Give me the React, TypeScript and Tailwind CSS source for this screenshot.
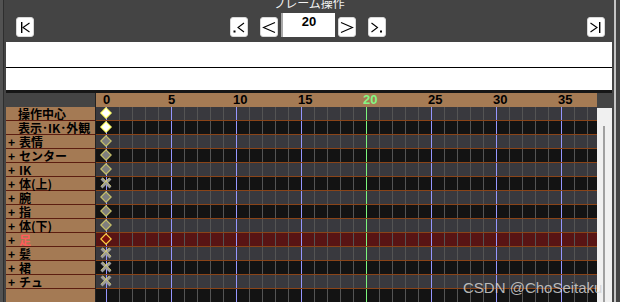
import React from "react";

type RowDef = {
  label: string;
  indent?: boolean;
  red?: boolean;
  bg: string;
  key: "white" | "gray" | "red" | "x" | null;
};

const FRAMES = Array.from({ length: 38 }, (_, i) => i);

const ROWS: RowDef[] = [
  { label: "操作中心", indent: true, bg: "bg-[#39393e]", key: "white" },
  { label: "表示･IK･外観", indent: true, bg: "bg-[#131313]", key: "white" },
  { label: "表情", bg: "bg-[#39393e]", key: "gray" },
  { label: "センター", bg: "bg-[#131313]", key: "gray" },
  { label: "IK", bg: "bg-[#39393e]", key: "gray" },
  { label: "体(上)", bg: "bg-[#131313]", key: "x" },
  { label: "腕", bg: "bg-[#39393e]", key: "gray" },
  { label: "指", bg: "bg-[#131313]", key: "gray" },
  { label: "体(下)", bg: "bg-[#39393e]", key: "gray" },
  { label: "足", red: true, bg: "bg-[#581414]", key: "red" },
  { label: "髪", bg: "bg-[#39393e]", key: "x" },
  { label: "裙", bg: "bg-[#131313]", key: "x" },
  { label: "チュ", bg: "bg-[#39393e]", key: "x" },
];

function lineColor(k: number) {
  if (k === 20) return "border-[#7cf57c]";
  if (k % 5 === 0) return "border-[#9696ff]";
  return "border-[#545454]";
}

function KeyMark({ kind }: { kind: RowDef["key"] }) {
  if (!kind) return null;
  if (kind === "x") {
    return (
      <svg width="12" height="12" viewBox="0 0 12 12" className="absolute left-[4px] top-[0px]">
        <path d="M1.5 1.5L10.5 10.5M10.5 1.5L1.5 10.5" stroke="#9c9c9c" strokeWidth="2.8" />
        <path d="M2.8 1L11 9.2M1 9.2L9.2 1" stroke="#e6dc6a" strokeWidth="0.8" />
      </svg>
    );
  }
  const fill = kind === "white" ? "#ffffff" : kind === "red" ? "#7a0e0e" : "#7e7e7e";
  const stroke = kind === "white" ? "#ffff70" : kind === "red" ? "#ffd040" : "#c8c26a";
  return (
    <svg width="12" height="12" viewBox="0 0 12 12" className="absolute left-[4px] top-[0px]">
      <polygon points="6,0.8 11.2,6 6,11.2 0.8,6" fill={fill} stroke={stroke} strokeWidth="1.2" />
    </svg>
  );
}

function GridRow({ bg, kind }: { bg: string; kind: RowDef["key"] }) {
  return (
    <div className={`relative flex h-[14px] border-b border-[#8a4418] ${bg}`}>
      <div className="w-[10px] shrink-0" />
      {FRAMES.map((k) => (
        <div
          key={k}
          className={`${k === 37 ? "w-[10px]" : "w-[13px]"} shrink-0 border-l ${lineColor(k)}`}
        />
      ))}
      <KeyMark kind={kind} />
    </div>
  );
}

function NavButton({ children }: { children: React.ReactNode }) {
  return (
    <div className="h-[20px] w-[18px] shrink-0 rounded-[3px] border border-[#d8d8d8] bg-white">
      <svg width="16" height="18" viewBox="0 0 16 18" fill="none" stroke="black" strokeWidth="1.1">
        {children}
      </svg>
    </div>
  );
}

export default function App() {
  return (
    <div className="relative flex h-[302px] w-[620px] overflow-hidden bg-[#444] font-['Noto_Sans_CJK_JP','Noto_Sans',sans-serif]">
      {/* left edge */}
      <div className="flex w-[6px] shrink-0">
        <div className="w-[3px] bg-[#525252]" />
        <div className="w-[1px] bg-[#2e2e2e]" />
        <div className="w-[2px] bg-[#444]" />
      </div>

      <div className="flex w-[606px] shrink-0 flex-col">
        {/* frame controls */}
        <div className="flex h-[42px] shrink-0 flex-col items-center">
          <div className="-mt-[3px] h-[12px] text-[12px] leading-[12px] text-[#f2f2f2]">フレーム操作</div>
          <div className="mt-[4px] flex h-[24px] w-full items-end">
            <div className="ml-[10px]">
              <NavButton>
                <rect x="4" y="4" width="1.4" height="11" fill="black" stroke="none" />
                <polyline points="12.5,5 6,9.5 12.5,14" />
              </NavButton>
            </div>
            <div className="ml-[196px]">
              <NavButton>
                <rect x="2.5" y="12.5" width="2" height="2" fill="black" stroke="none" />
                <polyline points="13,5 7,9.5 13,14" />
              </NavButton>
            </div>
            <div className="ml-[12px]">
              <NavButton>
                <polyline points="14,4.5 2.5,9.5 14,14.5" />
              </NavButton>
            </div>
            <div className="ml-[3px] flex h-[24px] w-[54px] shrink-0 justify-center border-l-2 border-[#a8a8a8] bg-white pt-[2px] font-['Liberation_Sans',sans-serif] text-[13px] font-bold leading-[14px] text-black">
              20
            </div>
            <div className="ml-[3px]">
              <NavButton>
                <polyline points="2,4.5 13.5,9.5 2,14.5" />
              </NavButton>
            </div>
            <div className="ml-[12px]">
              <NavButton>
                <polyline points="2.5,5 8.5,9.5 2.5,14" />
                <rect x="11" y="12.5" width="2" height="2" fill="black" stroke="none" />
              </NavButton>
            </div>
            <div className="ml-[201px]">
              <NavButton>
                <polyline points="2.5,5 9,9.5 2.5,14" />
                <rect x="11" y="4" width="1.4" height="11" fill="black" stroke="none" />
              </NavButton>
            </div>
          </div>
        </div>

        {/* white panel */}
        <div className="h-[25px] shrink-0 bg-white" />
        <div className="h-[1px] shrink-0 bg-black" />
        <div className="h-[22px] shrink-0 bg-white" />
        <div className="h-[3px] shrink-0 bg-[#161616]" />

        {/* timeline */}
        <div className="flex">
          {/* labels */}
          <div className="flex w-[90px] shrink-0 flex-col border-r border-[#222]">
            <div className="h-[14px] bg-[#444]" />
            {ROWS.map((r) => (
              <div
                key={r.label}
                className="flex h-[14px] items-center border-b border-[#5c1d10] bg-[#a47a54] text-[12px] font-bold leading-[13px] text-black"
              >
                {r.indent ? (
                  <span className="pl-[12px] whitespace-nowrap">{r.label}</span>
                ) : (
                  <>
                    <span className="inline-block w-[13px] pl-[2px]">+</span>
                    <span className={`whitespace-nowrap ${r.red ? "text-[#ff5a5a]" : ""}`}>{r.label}</span>
                  </>
                )}
              </div>
            ))}
            <div className="h-[14px] bg-[#a47a54]" />
          </div>

          {/* grid */}
          <div className="flex w-[501px] shrink-0 flex-col">
            <div className="flex h-[14px] bg-[#a57b54] font-['Liberation_Sans',sans-serif] text-[13px] font-bold leading-[14px]">
              <div className="w-[10px] shrink-0" />
              {FRAMES.map((k) => (
                <div key={k} className={`${k === 37 ? "w-[10px]" : "w-[13px]"} shrink-0`}>
                  {k % 5 === 0 && (
                    <span className={`-ml-[3px] block whitespace-nowrap ${k === 20 ? "text-[#84f784]" : "text-black"}`}>
                      {k}
                    </span>
                  )}
                </div>
              ))}
            </div>
            {ROWS.map((r) => (
              <GridRow key={r.label} bg={r.bg} kind={r.key} />
            ))}
            <GridRow bg="bg-[#131313]" kind={null} />
          </div>

          {/* scrollbar */}
          <div className="flex w-[15px] shrink-0 flex-col">
            <div className="h-[15px] bg-[#444]" />
            <div className="flex flex-1 bg-[#f0f0f0] pl-[6px] pt-[18px]">
              <div className="h-[200px] w-[2px] bg-[#a0a0a0]" />
            </div>
          </div>
        </div>
      </div>

      {/* right edge */}
      <div className="flex w-[8px] shrink-0">
        <div className="w-[2px] bg-[#444]" />
        <div className="w-[2px] bg-[#c4c4c4]" />
        <div className="w-[4px] bg-[#444]" />
      </div>

      <div className="absolute left-[463px] top-[280px] font-['Liberation_Sans',sans-serif] text-[15px] leading-[15px] text-[#d2d2d2]/85">
        CSDN @ChoSeitaku
      </div>
    </div>
  );
}
